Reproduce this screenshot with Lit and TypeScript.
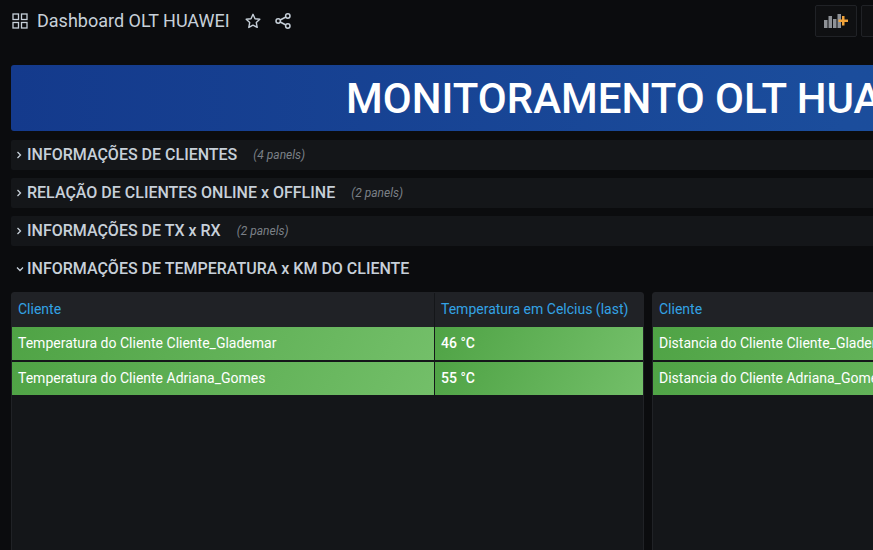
import { LitElement, html, css } from 'lit';
import { customElement } from 'lit/decorators.js';

const rows = [
  { name: 'Cliente_Glademar', temp: '46 °C' },
  { name: 'Adriana_Gomes', temp: '55 °C' },
];

@customElement('app-root')
export class AppRoot extends LitElement {
  static styles = css`
    :host {
      display: block;
      width: 873px;
      height: 550px;
      overflow: hidden;
      background: #0b0c0e;
      color: #d8d9da;
      font-family: Roboto, 'Liberation Sans', sans-serif;
    }
    .page {
      width: 1400px;
    }
    .navbar {
      display: flex;
      align-items: center;
      height: 41px;
      padding-left: 12px;
    }
    .title {
      margin: 0 0 0 9px;
      font-size: 18px;
      font-weight: 400;
      color: #c7d0d9;
      white-space: nowrap;
    }
    .star {
      margin-left: 15px;
    }
    .share {
      margin-left: 14px;
    }
    .actions {
      display: flex;
      gap: 4px;
      margin-left: 524px;
    }
    .tool {
      display: flex;
      align-items: center;
      justify-content: center;
      box-sizing: border-box;
      width: 42px;
      height: 32px;
      border: 1px solid #202226;
      border-radius: 2px;
      background: #0f1012;
    }
    .content {
      padding: 24px 0 0 11px;
    }
    .banner {
      box-sizing: border-box;
      height: 66px;
      margin-bottom: 9px;
      padding-left: 335px;
      border-radius: 3px;
      background: linear-gradient(90deg, #143a8c, #1b4d9c 60%, #1a4f9e);
      color: #fff;
      font-size: 42px;
      font-weight: 500;
      line-height: 67px;
      white-space: nowrap;
    }
    .row {
      display: flex;
      align-items: center;
      box-sizing: border-box;
      height: 30px;
      margin-bottom: 8px;
      padding-left: 5px;
      background: #141619;
      border-radius: 2px;
    }
    .row.open {
      background: none;
    }
    .row-title {
      margin: 0 0 2px 5px;
      font-size: 16px;
      font-weight: 500;
      color: #c7d0d9;
      white-space: nowrap;
    }
    .row.open .row-title {
      margin-left: 3px;
    }
    .count {
      margin-left: 16px;
      font-size: 12px;
      font-style: italic;
      color: #7b8087;
      white-space: nowrap;
    }
    .panels {
      display: grid;
      grid-template-columns: 633px 633px;
      gap: 8px;
    }
    .panel {
      box-sizing: border-box;
      height: 300px;
      background: #141619;
      border: 1px solid #202226;
      border-radius: 3px;
    }
    .head,
    .cells {
      display: grid;
      grid-template-columns: 422px 1fr;
    }
    .head {
      height: 34px;
      background: #202226;
      color: #33a2e5;
      font-size: 14px;
      font-weight: 400;
      line-height: 32px;
    }
    .head span,
    .cells span {
      padding-left: 6px;
      white-space: nowrap;
      overflow: hidden;
    }
    .head span + span {
      border-left: 1px solid #141619;
    }
    .cells {
      height: 33px;
      margin-bottom: 2px;
      color: #fff;
      font-size: 14px;
      font-weight: 400;
      line-height: 33px;
    }
    .cells span {
      background: linear-gradient(120deg, #4fa345, #73bf69);
    }
    .cells span + span {
      margin-left: 1px;
      font-weight: 500;
    }
  `;

  renderCollapsed(label: string, count: number) {
    return html`
      <div class="row">
        <svg width="6" height="8" viewBox="0 0 6 8" fill="none" stroke="#c7d0d9" stroke-width="1.3">
          <path d="M1.5 1l3 3-3 3" />
        </svg>
        <span class="row-title">${label}</span>
        <span class="count">(${count} panels)</span>
      </div>
    `;
  }

  render() {
    return html`
      <div class="page">
        <header class="navbar">
          <svg width="16" height="16" viewBox="0 0 16 16" fill="none" stroke="#c7d0d9" stroke-width="1.3">
            <rect x="1" y="1" width="5.5" height="5.5" />
            <rect x="9.5" y="1" width="5.5" height="5.5" />
            <rect x="1" y="9.5" width="5.5" height="5.5" />
            <rect x="9.5" y="9.5" width="5.5" height="5.5" />
          </svg>
          <h1 class="title">Dashboard OLT HUAWEI</h1>
          <svg class="star" width="16" height="16" viewBox="0 0 16 16" fill="none" stroke="#c7d0d9" stroke-width="1.4" stroke-linejoin="round">
            <path d="M8 1.300l2 4.400 4.800.6-3.500 3.300.9 4.800L8 12.100l-4.200 2.300.9-4.800L1.200 6.300 6 5.700z" />
          </svg>
          <svg class="share" width="16" height="16" viewBox="0 0 16 16" fill="none" stroke="#c7d0d9" stroke-width="1.5">
            <circle cx="12.8" cy="3" r="2.2" />
            <circle cx="3.2" cy="8" r="2.2" />
            <circle cx="12.8" cy="13" r="2.2" />
            <path d="M5.200 7l5.700-3M5.200 9l5.700 3" />
          </svg>
          <div class="actions">
            <div class="tool">
              <svg width="24" height="14" viewBox="0 0 24 14">
                <path fill="#8e9196" d="M0 6h3.500v8H0zM4.500 2h3.500v12H4.500zM9 5h3.500v9H9zM13.500 0H17v14h-3.500z" />
                <path fill="#f2a33a" d="M18 2h2.500v3.500H24V8h-3.500v3.500H18V8h-3.500V5.500H18z" />
              </svg>
            </div>
            <div class="tool"></div>
          </div>
        </header>
        <main class="content">
          <div class="banner">MONITORAMENTO OLT HUAWEI</div>
          ${this.renderCollapsed('INFORMAÇÕES DE CLIENTES', 4)}
          ${this.renderCollapsed('RELAÇÃO DE CLIENTES ONLINE x OFFLINE', 2)}
          ${this.renderCollapsed('INFORMAÇÕES DE TX x RX', 2)}
          <div class="row open">
            <svg width="8" height="6" viewBox="0 0 8 6" fill="none" stroke="#c7d0d9" stroke-width="1.3">
              <path d="M1 1.500l3 3 3-3" />
            </svg>
            <span class="row-title">INFORMAÇÕES DE TEMPERATURA x KM DO CLIENTE</span>
          </div>
          <div class="panels">
            <section class="panel">
              <div class="head"><span>Cliente</span><span>Temperatura em Celcius (last)</span></div>
              ${rows.map(
                (r) => html`<div class="cells"><span>Temperatura do Cliente ${r.name}</span><span>${r.temp}</span></div>`
              )}
            </section>
            <section class="panel">
              <div class="head"><span>Cliente</span><span></span></div>
              ${rows.map(
                (r) => html`<div class="cells"><span>Distancia do Cliente ${r.name}</span><span></span></div>`
              )}
            </section>
          </div>
        </main>
      </div>
    `;
  }
}
